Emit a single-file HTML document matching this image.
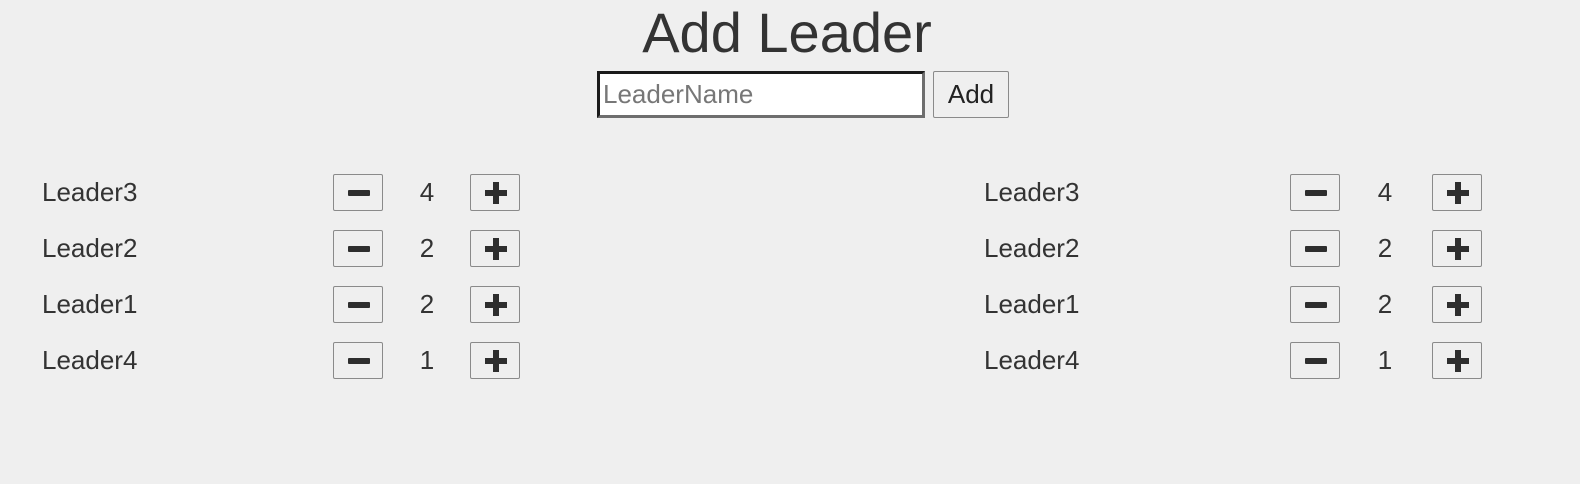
<!DOCTYPE html>
<html><head><style>
body{margin:0;width:1580px;height:484px;background:#efefef;font-family:"Liberation Sans",sans-serif;color:#333;position:relative;overflow:hidden}
.a{position:absolute}
h1{position:absolute;margin:0;left:0;width:1574px;text-align:center;top:0px;font-size:56px;font-weight:normal;color:#333}
.inp{left:597px;top:71px;height:41px;background:#fff;border:3px solid #1a1a1a;border-right-color:#6e6e6e;border-bottom-color:#6e6e6e;font-size:26px;color:#777;line-height:41px;padding-left:3px;width:319px}
.btn{border:1px solid #8a8a8a;border-radius:2px;background:#efefef;box-sizing:border-box}
.add{left:933px;top:71px;width:76px;height:47px;font-size:26px;line-height:45px;text-align:center;color:#222}
.lbl{font-size:26px;line-height:37px}
.num{font-size:26px;line-height:37px;width:40px;text-align:center}
.m,.p{width:50px;height:37px}
.m::after{content:"";position:absolute;left:14px;top:15px;width:22px;height:6px;background:#2e2e2e;border-radius:1px}
.p::before{content:"";position:absolute;left:14px;top:15px;width:22px;height:6px;background:#2e2e2e}
.p::after{content:"";position:absolute;left:22px;top:7px;width:6px;height:22px;background:#2e2e2e}
</style></head><body>
<h1>Add Leader</h1>
<div class="a inp">LeaderName</div>
<div class="a btn add">Add</div>
<div id="rows"></div>
<script>
var d=[["Leader3",4],["Leader2",2],["Leader1",2],["Leader4",1]],h="";
[[42,333,407,470],[984,1290,1365,1432]].forEach(function(c){
d.forEach(function(r,i){var y=174+56*i;
h+='<div class="a lbl" style="left:'+c[0]+'px;top:'+y+'px">'+r[0]+'</div>'+
'<div class="a btn m" style="left:'+c[1]+'px;top:'+y+'px"></div>'+
'<div class="a num" style="left:'+c[2]+'px;top:'+y+'px">'+r[1]+'</div>'+
'<div class="a btn p" style="left:'+c[3]+'px;top:'+y+'px"></div>';});});
document.getElementById("rows").innerHTML=h;
</script>
</body></html>
